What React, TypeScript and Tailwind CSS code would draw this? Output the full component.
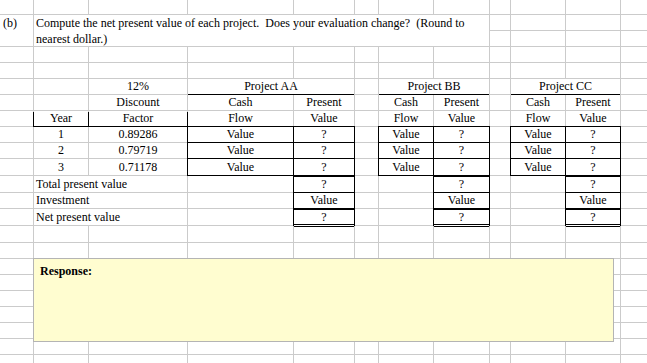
import React from 'react'

const box = 'bg-[#ffffcc] relative z-10 shadow-[0_0_0_1px_#000]'
const boxTop = 'bg-[#ffffcc] relative z-10 shadow-[0_0_0_1px_#000,inset_0_1px_0_#000]'
const boxNet =
  'bg-[#ffffcc] relative z-10 shadow-[0_1px_0_0_#fff,0_2px_0_0_#000,0_0_0_1px_#000,inset_0_1px_0_#000,inset_0_-1px_0_#000]'

function C({ children, className = '' }: { children?: React.ReactNode; className?: string }) {
  return (
    <div className={`bg-white flex items-center justify-center whitespace-nowrap leading-[15px] ${className}`}>
      {children}
    </div>
  )
}

function Empty({ n }: { n: number }) {
  return (
    <>
      {Array.from({ length: n }).map((_, i) => (
        <C key={i} />
      ))}
    </>
  )
}

const years = [
  ['1', '0.89286'],
  ['2', '0.79719'],
  ['3', '0.71178'],
]

export default function App() {
  return (
    <div className="relative w-[647px] h-[363px] overflow-hidden bg-white font-['Liberation_Serif',serif] text-[12px] text-black">
      <div className="grid gap-px bg-[#cbcbcb] grid-cols-[33px_54px_98px_105px_60px_23px_54px_55px_20px_54px_54px_1fr] grid-rows-[14px_15px_15px_15px_15px_15px_15px_15px_15px_15px_16px_16px_15px_16px_16px_15px_15px_15px_15px_15px_15px_15px_15px]">
        <Empty n={12} />

        <C className="row-span-2 items-start justify-start pl-[3px] leading-[16px]">(b)</C>
        <C className="col-span-7 row-span-2 items-start justify-start pl-[2px] leading-[16px] whitespace-pre">
          {'Compute the net present value of each project.  Does your evaluation change?  (Round to\nnearest dollar.)'}
        </C>
        <Empty n={4} />
        <Empty n={4} />

        <Empty n={12} />
        <Empty n={12} />

        <C />
        <C />
        <C>12%</C>
        <C className="col-span-2 shadow-[0_1px_0_0_#000]">Project AA</C>
        <C />
        <C className="col-span-2 shadow-[0_1px_0_0_#000]">Project BB</C>
        <C />
        <C className="col-span-2 shadow-[0_1px_0_0_#000]">Project CC</C>
        <C />

        <C />
        <C />
        <C>Discount</C>
        <C>Cash</C>
        <C>Present</C>
        <C />
        <C>Cash</C>
        <C>Present</C>
        <C />
        <C>Cash</C>
        <C>Present</C>
        <C />

        <C />
        <C className="shadow-[0_1px_0_0_#000,-1px_1px_0_0_#000,1px_1px_0_0_#000]">Year</C>
        <C className="shadow-[0_1px_0_0_#000,1px_1px_0_0_#000]">Factor</C>
        <C>Flow</C>
        <C>Value</C>
        <C />
        <C>Flow</C>
        <C>Value</C>
        <C />
        <C>Flow</C>
        <C>Value</C>
        <C />

        {years.map(([y, f]) => (
          <React.Fragment key={y}>
            <C />
            <C>{y}</C>
            <C>{f}</C>
            <C className={box}>Value</C>
            <C className={box}>?</C>
            <C />
            <C className={box}>Value</C>
            <C className={box}>?</C>
            <C />
            <C className={box}>Value</C>
            <C className={box}>?</C>
            <C />
          </React.Fragment>
        ))}

        <C />
        <C className="col-span-2 justify-start pl-[2px]">Total present value</C>
        <C />
        <C className={boxTop}>?</C>
        <C />
        <C />
        <C className={boxTop}>?</C>
        <C />
        <C />
        <C className={boxTop}>?</C>
        <C />

        <C />
        <C className="col-span-2 justify-start pl-[2px]">Investment</C>
        <C />
        <C className={box}>Value</C>
        <C />
        <C />
        <C className={box}>Value</C>
        <C />
        <C />
        <C className={box}>Value</C>
        <C />

        <C />
        <C className="col-span-2 justify-start pl-[2px]">Net present value</C>
        <C />
        <C className={boxNet}>?</C>
        <C />
        <C />
        <C className={boxNet}>?</C>
        <C />
        <C />
        <C className={boxNet}>?</C>
        <C />

        {Array.from({ length: 9 }).map((_, i) => (
          <Empty key={i} n={12} />
        ))}
      </div>

      <div className="absolute left-[33px] top-[258px] w-[581px] h-[84px] bg-[#fffdd0] border border-[#b4b4b4] px-[6px] pt-[5px]">
        <p className="font-bold leading-[15px]">Response:</p>
      </div>
    </div>
  )
}
